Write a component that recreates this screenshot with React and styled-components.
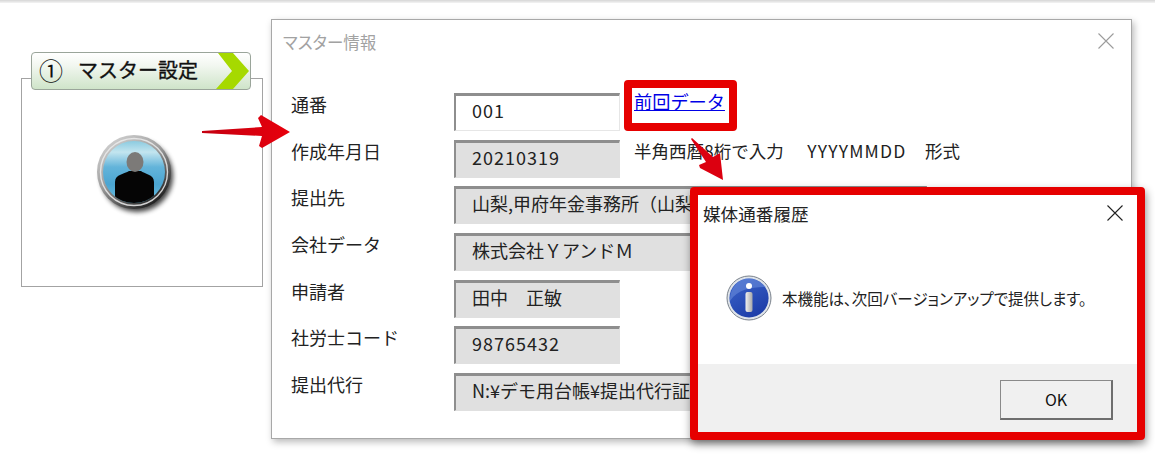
import React from "react";
import styled, { createGlobalStyle } from "styled-components";

const FONT = `"Noto Sans CJK JP", "Noto Sans", sans-serif`;

const Global = createGlobalStyle`
  html, body { margin: 0; padding: 0; background: #fff; }
  body { font-family: ${FONT}; color: #222; overflow: hidden; }
`;

const Desktop = styled.div`
  position: relative;
  width: 1155px;
  height: 466px;
  overflow: hidden;
  background: #fff;
`;

const TopEdge = styled.div`
  height: 3px;
  background: linear-gradient(#d6d6d6, #f4f4f4);
`;

const MenuPanel = styled.section`
  position: absolute;
  left: 21px;
  top: 78px;
  width: 240px;
  height: 207px;
  border: 1px solid #a3a3a3;
  background: #fff;
  display: flex;
  flex-direction: column;
  align-items: center;
`;

const MenuTab = styled.div`
  position: relative;
  overflow: hidden;
  box-sizing: border-box;
  align-self: flex-start;
  display: flex;
  align-items: center;
  gap: 15px;
  margin: -27px 0 0 9px;
  width: 220px;
  height: 38px;
  padding: 0 0 3px 7px;
  border: 1px solid #9aa59a;
  border-radius: 4px;
  background: linear-gradient(#ffffff 0%, #f2f7f0 35%, #cfe4c9 100%);
  font-size: 20px;
  line-height: 30px;
  color: #111;
  -webkit-text-stroke: 0.35px #111;
  white-space: pre;
`;

const TabNumber = styled.span`
  font-size: 24px;
  -webkit-text-stroke: 0;
`;

const TabChevron = styled.svg`
  position: absolute;
  right: 0;
  top: 0;
`;

const Avatar = styled.svg`
  margin: 40px 13px 0 0;
`;

const MasterWindow = styled.section`
  position: absolute;
  left: 271px;
  top: 19px;
  box-sizing: border-box;
  width: 861px;
  height: 420px;
  border: 1px solid #a8a8a8;
  background: #fff;
  box-shadow: 2px 3px 7px rgba(0, 0, 0, 0.28);
  padding: 0 0 0 19px;
`;

const WindowTitle = styled.div`
  margin: 10px 0 0 -8px;
  height: 63px;
  font-size: 16.5px;
  font-feature-settings: "palt";
  line-height: 24px;
  color: #a2a2a2;
`;

const CloseMark = styled.svg`
  position: absolute;
  right: ${(p) => p.$right}px;
  top: ${(p) => p.$top}px;
`;

const FormGrid = styled.div`
  display: grid;
  grid-template-columns: 163px 1fr;
  grid-auto-rows: 37.67px;
  row-gap: 9px;
`;

const FieldLabel = styled.div`
  font-size: 18px;
  line-height: 24px;
  margin-top: -1px;
`;

const FieldRow = styled.div`
  display: flex;
  align-items: flex-start;
`;

const FieldBox = styled.div`
  box-sizing: border-box;
  width: ${(p) => p.$width}px;
  height: 38px;
  border-top: 3px solid #8e8e8e;
  border-left: 2px solid #8e8e8e;
  border-right: 1px solid ${(p) => (p.$editable ? "#e6e6e6" : "#e0e0e0")};
  border-bottom: 1px solid ${(p) => (p.$editable ? "#e6e6e6" : "#e0e0e0")};
  background: ${(p) => (p.$editable ? "#fff" : "#e0e0e0")};
  padding-left: 16px;
  font-size: 18px;
  line-height: 29px;
  letter-spacing: ${(p) => (p.$digits ? "1px" : "0")};
  white-space: pre;
  overflow: hidden;
`;

const HintText = styled.span`
  margin: -1px 0 0 14px;
  font-size: 17.5px;
  line-height: 24px;
  white-space: pre;
`;

const HintFormat = styled.span`
  margin: 0 1px 0 6px;
  letter-spacing: 1.2px;
`;

const LinkFrame = styled.div`
  position: absolute;
  left: 352px;
  top: 60px;
  box-sizing: border-box;
  width: 113px;
  height: 51px;
  border: 8px solid #e60000;
  border-radius: 4px;
  background: #fff;
  padding-left: 2px;
`;

const DataLink = styled.a`
  display: block;
  font-size: 18.2px;
  line-height: 26px;
  color: #0000e6;
  text-decoration: underline;
  white-space: nowrap;
`;

const Arrow = styled.svg`
  position: absolute;
  left: ${(p) => p.$left}px;
  top: ${(p) => p.$top}px;
`;

const MessageDialog = styled.section`
  position: absolute;
  left: 690px;
  top: 187px;
  box-sizing: border-box;
  width: 455px;
  height: 253px;
  border: 8px solid #e60000;
  border-radius: 4px;
  background: #fff;
  box-shadow: 1px 4px 9px rgba(0, 0, 0, 0.45);
  display: flex;
  flex-direction: column;
`;

const DialogTitle = styled.div`
  margin: 7px 0 0 5px;
  height: 24px;
  font-size: 17.6px;
  line-height: 24px;
  font-feature-settings: "palt";
  color: #222;
`;

const DialogBody = styled.div`
  flex: 1;
  display: flex;
  align-items: center;
  gap: 10px;
  padding: 6px 0 0 28px;
  font-size: 15.5px;
  font-feature-settings: "palt";
  line-height: 24px;
  white-space: nowrap;
`;

const DialogFooter = styled.div`
  height: 68px;
  background: #f0f0f0;
  display: flex;
  justify-content: flex-end;
  align-items: flex-start;
  padding: 16px 24px 0 0;
  box-sizing: border-box;
`;

const OkButton = styled.button`
  box-sizing: border-box;
  width: 113px;
  height: 40px;
  background: #f0f0f0;
  border: 1px solid #8a8a8a;
  border-right: 2px solid #6e6e6e;
  border-bottom: 2px solid #6e6e6e;
  font-family: ${FONT};
  font-size: 16px;
  color: #111;
  padding: 0 0 2px;
`;

const fields = [
  { label: "通番", value: "001", width: 166, editable: true, digits: true },
  { label: "作成年月日", value: "20210319", width: 166, digits: true, hint: true },
  { label: "提出先", value: "山梨,甲府年金事務所（山梨", width: 473 },
  { label: "会社データ", value: "株式会社ＹアンドＭ", width: 473 },
  { label: "申請者", value: "田中　正敏", width: 166 },
  { label: "社労士コード", value: "98765432", width: 166, digits: true },
  { label: "提出代行", value: "N:¥デモ用台帳¥提出代行証", width: 473 },
];

const Close = ({ right, top, color, size = 16 }) => (
  <CloseMark $right={right} $top={top} width={size} height={size} viewBox="0 0 16 16">
    <path d="M0.5 0.5 15.5 15.5 M15.5 0.5 0.5 15.5" stroke={color} strokeWidth="1.1" fill="none" />
  </CloseMark>
);

const AvatarIcon = () => (
  <Avatar width="84" height="88" viewBox="0 0 84 88">
    <defs>
      <linearGradient id="ring" x1="0.1" y1="0" x2="0.8" y2="1">
        <stop offset="0" stopColor="#d8d8d8" />
        <stop offset="0.45" stopColor="#a0a0a0" />
        <stop offset="0.8" stopColor="#444" />
        <stop offset="1" stopColor="#111" />
      </linearGradient>
      <linearGradient id="face" x1="0" y1="0" x2="0" y2="1">
        <stop offset="0" stopColor="#8ccbe0" />
        <stop offset="0.18" stopColor="#c3e5ef" />
        <stop offset="0.42" stopColor="#63b4da" />
        <stop offset="0.7" stopColor="#4ba5d2" />
        <stop offset="1" stopColor="#6cc0e0" />
      </linearGradient>
      <clipPath id="faceClip">
        <circle cx="40" cy="42" r="31" />
      </clipPath>
      <filter id="soft" x="-30%" y="-30%" width="160%" height="160%">
        <feGaussianBlur stdDeviation="2.5" />
      </filter>
    </defs>
    <circle cx="43" cy="46" r="36" fill="#000" opacity="0.75" filter="url(#soft)" />
    <circle cx="40" cy="42" r="37" fill="url(#ring)" />
    <circle cx="40" cy="42" r="33.5" fill="none" stroke="#ececec" strokeWidth="1.4" opacity="0.85" />
    <circle cx="40" cy="42" r="31" fill="url(#face)" />
    <g clipPath="url(#faceClip)">
      <path d="M21 76 V52 C21 44 31 44 35 41 H47 C50 44 60 44 60 52 V76 Z" fill="#050505" />
    </g>
    <ellipse cx="41" cy="32" rx="8.5" ry="10" fill="#7c7a78" />
  </Avatar>
);

const InfoIcon = () => (
  <svg width="46" height="46" viewBox="0 0 46 46">
    <defs>
      <linearGradient id="orb" x1="0.2" y1="0" x2="0.8" y2="1">
        <stop offset="0" stopColor="#3a62c8" />
        <stop offset="1" stopColor="#1a3aa6" />
      </linearGradient>
      <linearGradient id="stem" x1="0" y1="0" x2="1" y2="0">
        <stop offset="0" stopColor="#f0f0f0" />
        <stop offset="1" stopColor="#a8a8a8" />
      </linearGradient>
    </defs>
    <circle cx="23" cy="23" r="22" fill="#dfe4ea" stroke="#7a828c" strokeWidth="1" />
    <circle cx="23" cy="23" r="19.6" fill="url(#orb)" />
    <path d="M4 26 C12 14 26 12 40 12 C34 6 28 3.5 23 3.5 C12 3.5 4 13 4 26 Z" fill="#6d8fdc" opacity="0.55" />
    <circle cx="23" cy="11" r="3" fill="#fff" />
    <rect x="19.5" y="17" width="7" height="20" rx="2" fill="url(#stem)" />
  </svg>
);

export default function App() {
  return (
    <Desktop>
      <Global />
      <TopEdge />
      <MenuPanel>
        <MenuTab>
          <TabNumber>①</TabNumber>
          <span>マスター設定</span>
          <TabChevron width="40" height="36" viewBox="0 0 40 36">
            <path d="M8 0 H23 L39 18 L23 36 H6 L22 18 Z" fill="#a6d900" />
          </TabChevron>
        </MenuTab>
        <AvatarIcon />
      </MenuPanel>

      <MasterWindow>
        <WindowTitle>マスター情報</WindowTitle>
        <Close right={17} top={13} color="#9c9c9c" />
        <FormGrid>
          {fields.map((f) => (
            <React.Fragment key={f.label}>
              <FieldLabel>{f.label}</FieldLabel>
              <FieldRow>
                <FieldBox $width={f.width} $editable={f.editable} $digits={f.digits}>
                  {f.value}
                </FieldBox>
                {f.hint && (
                  <HintText>
                    半角西暦8桁で入力　<HintFormat>YYYYMMDD</HintFormat>　形式
                  </HintText>
                )}
              </FieldRow>
            </React.Fragment>
          ))}
        </FormGrid>
        <LinkFrame>
          <DataLink>前回データ</DataLink>
        </LinkFrame>
      </MasterWindow>

      <Arrow $left={200} $top={112} width="92" height="40" viewBox="0 0 92 40">
        <defs>
          <linearGradient id="a1" x1="0" y1="0" x2="1" y2="0">
            <stop offset="0" stopColor="#c40010" />
            <stop offset="1" stopColor="#e8000c" />
          </linearGradient>
        </defs>
        <path d="M2 19 L62 15 L58 6 L61 3 L90 20 L62 36 L59 34 L62 24 L2 21 Z" fill="url(#a1)" />
      </Arrow>
      <Arrow $left={685} $top={135} width="44" height="50" viewBox="0 0 44 50">
        <path d="M7 3 L28 22 L35 18 L38 45 L15 33 L14 30 L21 27 L6 4 Z" fill="#dc0010" />
      </Arrow>

      <MessageDialog>
        <DialogTitle>媒体通番履歴</DialogTitle>
        <Close right={14} top={10} color="#222" />
        <DialogBody>
          <InfoIcon />
          <span>本機能は、次回バージョンアップで提供します。</span>
        </DialogBody>
        <DialogFooter>
          <OkButton>OK</OkButton>
        </DialogFooter>
      </MessageDialog>
    </Desktop>
  );
}
